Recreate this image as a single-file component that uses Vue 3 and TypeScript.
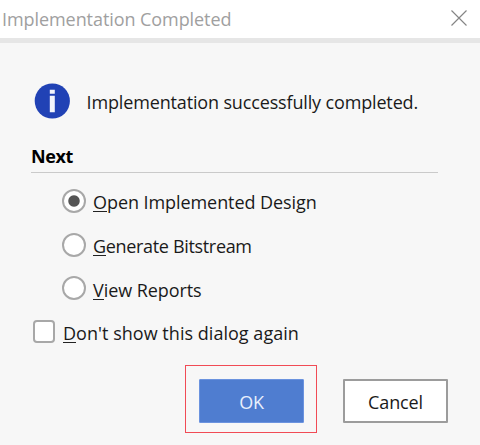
<script setup lang="ts">
import { ref } from 'vue'

interface Step {
  id: string
  key: string
  rest: string
}

const steps: Step[] = [
  { id: 'open', key: 'O', rest: 'pen Implemented Design' },
  { id: 'generate', key: 'G', rest: 'enerate Bitstream' },
  { id: 'view', key: 'V', rest: 'iew Reports' },
]
const selected = ref<string>('open')
const hideDialog = ref<boolean>(false)
</script>

<template>
  <div class="dialog">
    <header class="titlebar">
      <span class="title">Implementation Completed</span>
      <svg class="close" width="16" height="16" viewBox="0 0 16 16">
        <path d="M.5.5 15.5 15.5M15.5.5.5 15.5" stroke="#858585" stroke-width="1.15" fill="none" />
      </svg>
    </header>
    <main class="body">
      <div class="message">
        <svg width="36" height="36" viewBox="0 0 36 36">
          <circle cx="18.3" cy="18" r="17.6" fill="#2142b5" />
          <path d="M15.8 6.8h5v4h-5zM15.8 12.8h5v16.4h-5z" fill="#f3f5fc" />
        </svg>
        <span>Implementation successfully completed.</span>
      </div>
      <h2 class="heading">Next</h2>
      <div class="options">
        <label v-for="s in steps" :key="s.id" class="option" :class="s.id">
          <input v-model="selected" type="radio" name="next" :value="s.id" />
          <span class="caption"><span class="key">{{ s.key }}</span>{{ s.rest }}</span>
        </label>
      </div>
      <label class="remember">
        <input v-model="hideDialog" type="checkbox" />
        <span class="caption"><span class="key">D</span>on't show this dialog again</span>
      </label>
      <footer class="actions">
        <div class="highlight">
          <button class="btn primary">OK</button>
        </div>
        <button class="btn">Cancel</button>
      </footer>
    </main>
  </div>
</template>

<style>
body {
  margin: 0;
  background: #f7f7f7;
}
</style>

<style scoped>
* {
  box-sizing: border-box;
}
.dialog {
  width: 480px;
  height: 445px;
  overflow: hidden;
  background: #f7f7f7;
  color: #1a1a1a;
  font: 18px/24px "Open Sans", "Noto Sans", sans-serif;
  white-space: nowrap;
}
.titlebar {
  height: 43px;
  padding: 0 13px 0 2px;
  background: #fff;
  border-bottom: 5px solid #e6e6e6;
  display: flex;
  align-items: center;
  justify-content: space-between;
  color: #a0a0a0;
}
.title {
  letter-spacing: -0.07px;
}
.close {
  display: block;
  margin-top: -2px;
}
.body {
  padding: 40px 32px 0 31px;
}
.message {
  display: flex;
  align-items: center;
  height: 36px;
  margin-left: 3px;
  gap: 16.6px;
  letter-spacing: -0.15px;
}
.message span {
  padding-top: 2px;
}
.heading {
  margin: 25px 10px 0 0;
  height: 29px;
  border-bottom: 1px solid #cacaca;
  font-size: 18px;
  line-height: 24px;
  font-weight: 700;
  letter-spacing: -0.4px;
  color: #000;
}
.options {
  margin: 6px 0 0 31px;
}
.option {
  display: flex;
  align-items: center;
  height: 43.7px;
  gap: 7px;
  letter-spacing: -0.07px;
}
.option.generate {
  letter-spacing: -0.33px;
}
.caption {
  padding-top: 2px;
}
.option.view .caption {
  padding-top: 3px;
}
.key {
  display: inline-block;
  height: 22px;
  border-bottom: 1px solid #222;
}
input {
  appearance: none;
  flex: none;
  margin: 0;
  background: #fff;
  border: 2px solid #a8a8a8;
}
input[type="radio"] {
  width: 24px;
  height: 24px;
  border-radius: 50%;
}
input[type="radio"]:checked {
  background: radial-gradient(circle, #555 5.2px, #fff 6.2px);
}
.remember {
  display: flex;
  align-items: center;
  gap: 8px;
  height: 44px;
  margin-left: 2px;
  letter-spacing: 0.03px;
}
input[type="checkbox"] {
  width: 22px;
  height: 23px;
  margin-bottom: 2px;
  border-radius: 4px;
}
.actions {
  display: flex;
  align-items: flex-start;
  justify-content: flex-end;
  gap: 26px;
  margin-top: 11px;
}
.highlight {
  padding: 13px 12px 9px 13px;
  border: 1px solid #f14b55;
}
.btn {
  width: 105px;
  height: 44px;
  padding: 2px 0 0;
  border: 2px solid #9c9c9c;
  border-radius: 1px;
  background: #fff;
  color: #1a1a1a;
  font: inherit;
  letter-spacing: -0.15px;
}
.actions > .btn {
  margin-top: 14px;
}
.primary {
  display: block;
  border: 1px solid #6b93df;
  background: #4f7dd0;
  color: #e8effc;
}
</style>
